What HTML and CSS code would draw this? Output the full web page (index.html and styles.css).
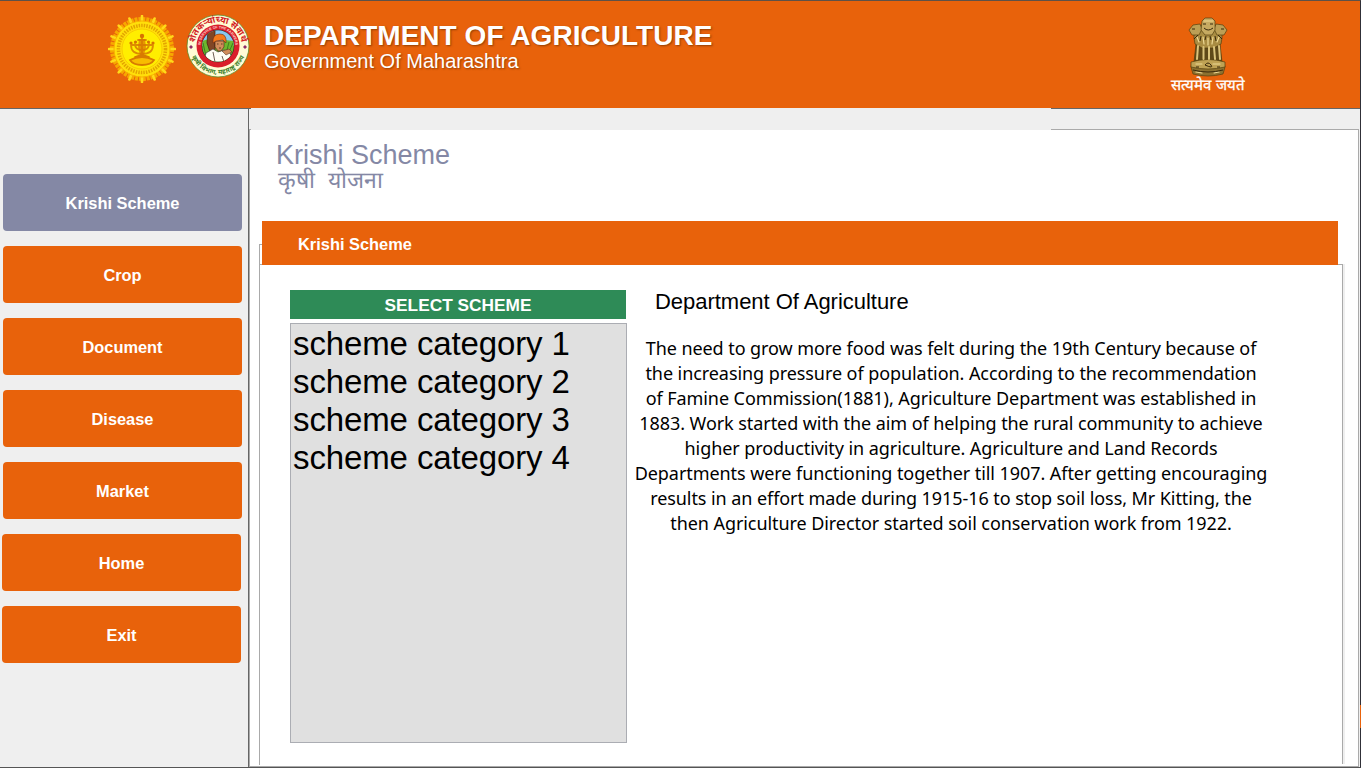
FILE: index.html
```html
<!DOCTYPE html>
<html lang="en">
<head>
<meta charset="utf-8">
<title>Department of Agriculture</title>
<link rel="stylesheet" href="styles.css">
</head>
<body>
<div class="window">
  <header class="header">
    <svg class="seal-state" viewBox="-34 -34 68 68" width="68" height="68">
      <circle r="30" fill="none" stroke="#f7a800" stroke-width="4" stroke-dasharray="3 .93"/>
      <path d="M0-33V33M-33 0H33M-23.3-23.3L23.3 23.3M23.3-23.3L-23.3 23.3M-12.6-30.5L12.6 30.5M12.6-30.5L-12.6 30.5M-30.5-12.6L30.5 12.6M-30.5 12.6L30.5-12.6" stroke="#ffd91a" stroke-width="2.6" stroke-linecap="round"/>
      <circle r="28" fill="#ffdf0a" stroke="#f8b400" stroke-width="1"/>
      <circle r="23.5" fill="none" stroke="#e3a500" stroke-width="3.6" stroke-dasharray="1.5 1.1"/>
      <circle r="20" fill="#ffee00" stroke="#f5c400" stroke-width=".8"/>
      <g fill="none" stroke="#dd8c00" stroke-width="1.8" stroke-linecap="round">
        <path d="M-11-4Q-11 5 0 5T11-4M-7-5Q-7 1 0 1T7-5M0-14V9M-4-9H4M-11-4H11"/>
        <path d="M-12 11Q-6 8 0 8T12 11Q9 16 0 16T-12 11ZM-7 8Q0 5 7 8" fill="#f8bc00" stroke="#d87b00"/>
      </g>
      <g fill="#d87300"><circle cy="-13" r="2.2"/><circle cx="-11" cy="-6" r="1.6"/><circle cx="11" cy="-6" r="1.6"/><circle cx="-6.5" cy="-7" r="1.6"/><circle cx="6.5" cy="-7" r="1.6"/><path d="M-3-10H3L4-2 2 6H-2L-4-2Z" opacity=".7"/></g>
    </svg>
    <svg class="seal-agri" viewBox="-32 -32 64 64" width="64" height="64">
      <defs>
        <path id="arc-top" d="M-23.3 3A23.5 23.5 0 1 1 23.3 3"/>
        <path id="arc-bottom" d="M-28.1 4A28.4 28.4 0 0 0 28.1 4"/>
        <path id="arc-inner" d="M-17.6 0A17.6 17.6 0 0 1 17.6 0"/>
        <clipPath id="scene"><circle r="15.8"/></clipPath>
      </defs>
      <circle r="31" fill="#fffbd5" stroke="#5c8a28" stroke-width=".8"/>
      <text class="seal-text seal-red"><textPath href="#arc-top" startOffset="50%" text-anchor="middle">शेतकऱ्यांच्या सेवार्थ</textPath></text>
      <text class="seal-text seal-green"><textPath href="#arc-bottom" startOffset="50%" text-anchor="middle">कृषी विभाग, महाराष्ट्र राज्य</textPath></text>
      <path d="M-29 1l2-2 2 2-2 2zM25 1l2-2 2 2-2 2z" fill="#8d2c67"/>
      <circle r="21.5" fill="#d91e2b"/>
      <text class="seal-motto"><textPath href="#arc-inner" startOffset="50%" text-anchor="middle">IN SERVICE OF THE FARMERS</textPath></text>
      <circle r="16.3" fill="#222"/>
      <g clip-path="url(#scene)">
        <path d="M-16-16H16V0H-16Z" fill="#88c8ef"/>
        <path d="M-16-5L-9-7-3-3 7-6 16-5V16H-16Z" fill="#6db72e"/>
        <path d="M-15-3L-12 10M11-4L9 4M15-3L11 6" stroke="#2f731d" stroke-width=".8"/>
        <path d="M-10-16H-3V9H-7L-11-3Z" fill="#804625" stroke="#40200f" stroke-width=".7"/>
        <path d="M-14 16L-12 7-5 3 0 6 6 4 12 7 15 16Z" fill="#fffef5" stroke="#343434" stroke-width=".6"/>
        <path d="M-3-5H6L6 1 3 5H0L-3 1Z" fill="#d08c5a" stroke="#442313" stroke-width=".6"/>
        <path d="M-5-3Q-6-12 2-12 9-12 8-3L5-6-2-5Z" fill="#f47a1c" stroke="#702b10" stroke-width=".6"/>
        <path d="M4 5L11 3 14 6 8 9Z" fill="#d08c5a" stroke="#442313" stroke-width=".5"/>
        <path d="M-1-2H0.5M3-2H4.5M1 2H3M-5 6L-3 16M4 10L6 16" stroke="#301a10" stroke-width=".7"/>
      </g>
    </svg>
    <div class="brand">
      <h1 class="brand-name">DEPARTMENT OF AGRICULTURE</h1>
      <p class="brand-sub">Government Of Maharashtra</p>
    </div>
    <div class="emblem">
      <svg viewBox="0 0 40 60" width="40" height="60">
        <g stroke="#54400f" stroke-width=".7" stroke-linejoin="round">
          <path d="M8 27H32L34 45H6Z" fill="#5f4918"/>
          <path d="M4 46Q20 42 36 46L37 50 35 57Q20 61 5 57L3 50Z" fill="#8c7130"/>
          <path d="M3 45Q20 40 37 45V50Q20 54 3 50Z" fill="#bfa254"/>
          <path d="M6 13L14 8H26L34 13 34 21 33 27 26 31H14L7 27 6 21Z" fill="#a98c42"/>
          <path d="M1 13L5 8 12 7 14 12 11 18 4 18Z" fill="#bc9f55"/>
          <path d="M39 13L35 8 28 7 26 12 29 18 36 18Z" fill="#bc9f55"/>
          <path d="M14 4L17 1H24L27 4 27 13 24 18H17L13 13Z" fill="#c6aa61"/>
        </g>
        <g fill="none" stroke="#dcc47b" stroke-width="2" stroke-linecap="round"><path d="M10 29L9 42M15.5 30V42M21 30V42M26 30L27 42M31 29L32 42"/></g>
        <g fill="none" stroke="#eed995" stroke-width="1.2" stroke-linecap="round"><path d="M16 4H25M9 20L11 25M31 20L29 25M15 20L16 27M20 21V28M25 20L24 27M8 47H14M25 47H32M8 55L14 56M26 56L31 55"/></g>
        <g fill="none" stroke="#39290b" stroke-width="1"><path d="M15 7H18M22 7H25M16 11Q20 15 25 11M4 12H7M33 12H36M6 22L10 18M34 22L30 18M12 24L13 19M28 24L27 19M17 23L18 19M23 23L22 19M17 48Q20 44 23 48T17 48M5 53Q20 57 35 53M8 50H11M29 50H32"/></g>
      </svg>
      <p class="emblem-motto" lang="hi">सत्यमेव जयते</p>
    </div>
  </header>
  <div class="body">
    <nav class="nav">
      <a class="nav-item is-active">Krishi Scheme</a>
      <a class="nav-item">Crop</a>
      <a class="nav-item">Document</a>
      <a class="nav-item">Disease</a>
      <a class="nav-item">Market</a>
      <a class="nav-item nav-item-wide">Home</a>
      <a class="nav-item nav-item-wide">Exit</a>
    </nav>
    <main class="main">
      <div class="strip"><div class="strip-cover"></div></div>
      <section class="page">
        <h2 class="title">Krishi Scheme</h2>
        <p class="title-local" lang="mr">कृषी&nbsp; योजना</p>
        <div class="banner">Krishi Scheme</div>
        <div class="frame">
          <div class="picker">
            <div class="picker-head">SELECT SCHEME</div>
            <ul class="picker-list">
              <li>scheme category 1</li>
              <li>scheme category 2</li>
              <li>scheme category 3</li>
              <li>scheme category 4</li>
            </ul>
          </div>
          <article class="about">
            <h3 class="about-title">Department Of Agriculture</h3>
            <p class="about-text">The need to grow more food was felt during the 19th Century because of<br>the increasing pressure of population. According to the recommendation<br>of Famine Commission(1881), Agriculture Department was established in<br>1883. Work started with the aim of helping the rural community to achieve<br>higher productivity in agriculture. Agriculture and Land Records<br>Departments were functioning together till 1907. After getting encouraging<br>results in an effort made during 1915-16 to stop soil loss, Mr Kitting, the<br>then Agriculture Director started soil conservation work from 1922.</p>
          </article>
        </div>
      </section>
    </main>
  </div>
  <div class="edge-mark"></div>
</div>
</body>
</html>
```
FILE: styles.css
```css
* { box-sizing: border-box; margin: 0; padding: 0; }
body { width: 1361px; height: 768px; overflow: hidden; font-family: "Liberation Sans", Arial, sans-serif; }
.window { position: relative; width: 1361px; height: 768px; display: flex; flex-direction: column; background: #efefef; border-top: 1px solid #5d5148; border-right: 1px solid #303038; border-bottom: 1px solid #555; }
.header { height: 108px; flex: none; display: flex; align-items: flex-start; background: #e8620b; border-bottom: 1px solid #666; padding-left: 108px; }
.seal-state { margin-top: 14px; }
.seal-agri { margin: 13px 0 0 10px; }
.seal-text { font-family: "Noto Sans Devanagari", "Liberation Sans", sans-serif; font-weight: bold; }
.seal-red { font-size: 9px; fill: #d3201f; }
.seal-green { font-size: 6.5px; fill: #3d7d28; }
.seal-motto { font-size: 3.6px; font-weight: bold; fill: #ffd8cf; }
.brand { margin: 19px 0 0 14px; color: #fff; text-shadow: 1px 1px 2px rgba(90, 40, 0, .6); white-space: nowrap; }
.brand-name { font-size: 28px; line-height: 32px; letter-spacing: .04px; }
.brand-sub { font-size: 20px; line-height: 23px; margin-top: -2px; }
.emblem { margin: 16px 107px 0 auto; width: 90px; display: flex; flex-direction: column; align-items: center; }
.emblem-motto { color: #fff; font-size: 15px; line-height: 20px; margin-top: -2px; white-space: nowrap; -webkit-text-stroke: .3px #fff; }
.body { flex: 1; display: flex; min-height: 0; }
.nav { width: 249px; border-right: 1px solid #666; padding: 65px 0 0 3px; display: flex; flex-direction: column; gap: 15px; }
.nav-item { width: 239px; height: 57px; border-radius: 4px; background: #e8620b; color: #fff; font-size: 16.4px; font-weight: bold; line-height: 59px; text-align: center; }
.is-active { background: #8488a5; }
.nav-item-wide { margin-left: -1px; }
.main { flex: 1; display: flex; flex-direction: column; }
.strip { height: 20px; flex: none; }
.strip-cover { width: 800px; height: 23px; margin: -1px 0 0 2px; position: relative; background: linear-gradient(#efefef 22px, #fff 22px); }
.page { flex: 1; width: 1110px; background: #fff; border: 1px solid #aaa; padding-top: 10px; display: flex; flex-direction: column; }
.title { font-size: 27px; line-height: 30px; font-weight: normal; color: #8488a5; padding-left: 26px; }
.title-local { font-size: 23px; line-height: 28px; color: #8488a5; padding-left: 28px; height: 55px; margin-top: -4px; white-space: nowrap; }
.banner { position: relative; z-index: 1; width: 1076px; height: 44px; flex: none; margin-left: 12px; padding-left: 36px; background: #e8620b; color: #fff; font-size: 16.4px; font-weight: bold; line-height: 46px; }
.frame { position: relative; width: 1084px; height: 500px; flex: none; margin: -1px 0 0 9px; border-top: 1px solid #aaa; border-right: 1px solid #aaa; box-shadow: 2px 0 #efefef; display: flex; padding-left: 31px; }
.frame::before { content: ""; position: absolute; left: 0; top: -21px; width: 3px; height: 520px; border: solid #aaa; border-width: 1px 0 0 1px; }
.picker { width: 337px; padding-top: 25px; }
.picker-head { width: 336px; height: 29px; background: #2e8b57; color: #fff; font-size: 17.3px; font-weight: bold; line-height: 31px; text-align: center; }
.picker-list { list-style: none; height: 420px; margin-top: 4px; padding: 1px 2px; background: #e0e0e0; border: 1px solid #abadb3; font-size: 33px; line-height: 38px; letter-spacing: -.12px; }
.about { width: 648px; }
.about-title { margin: 24px 0 0 28px; font-size: 22px; line-height: 25px; font-weight: normal; letter-spacing: -.03px; }
.about-text { margin-top: 22px; font-family: "Noto Sans", sans-serif; font-size: 18px; line-height: 25px; letter-spacing: -.07px; text-align: center; white-space: nowrap; }
.edge-mark { position: absolute; right: -1px; top: 704px; width: 1px; height: 23px; background: #e8620b; }
```
